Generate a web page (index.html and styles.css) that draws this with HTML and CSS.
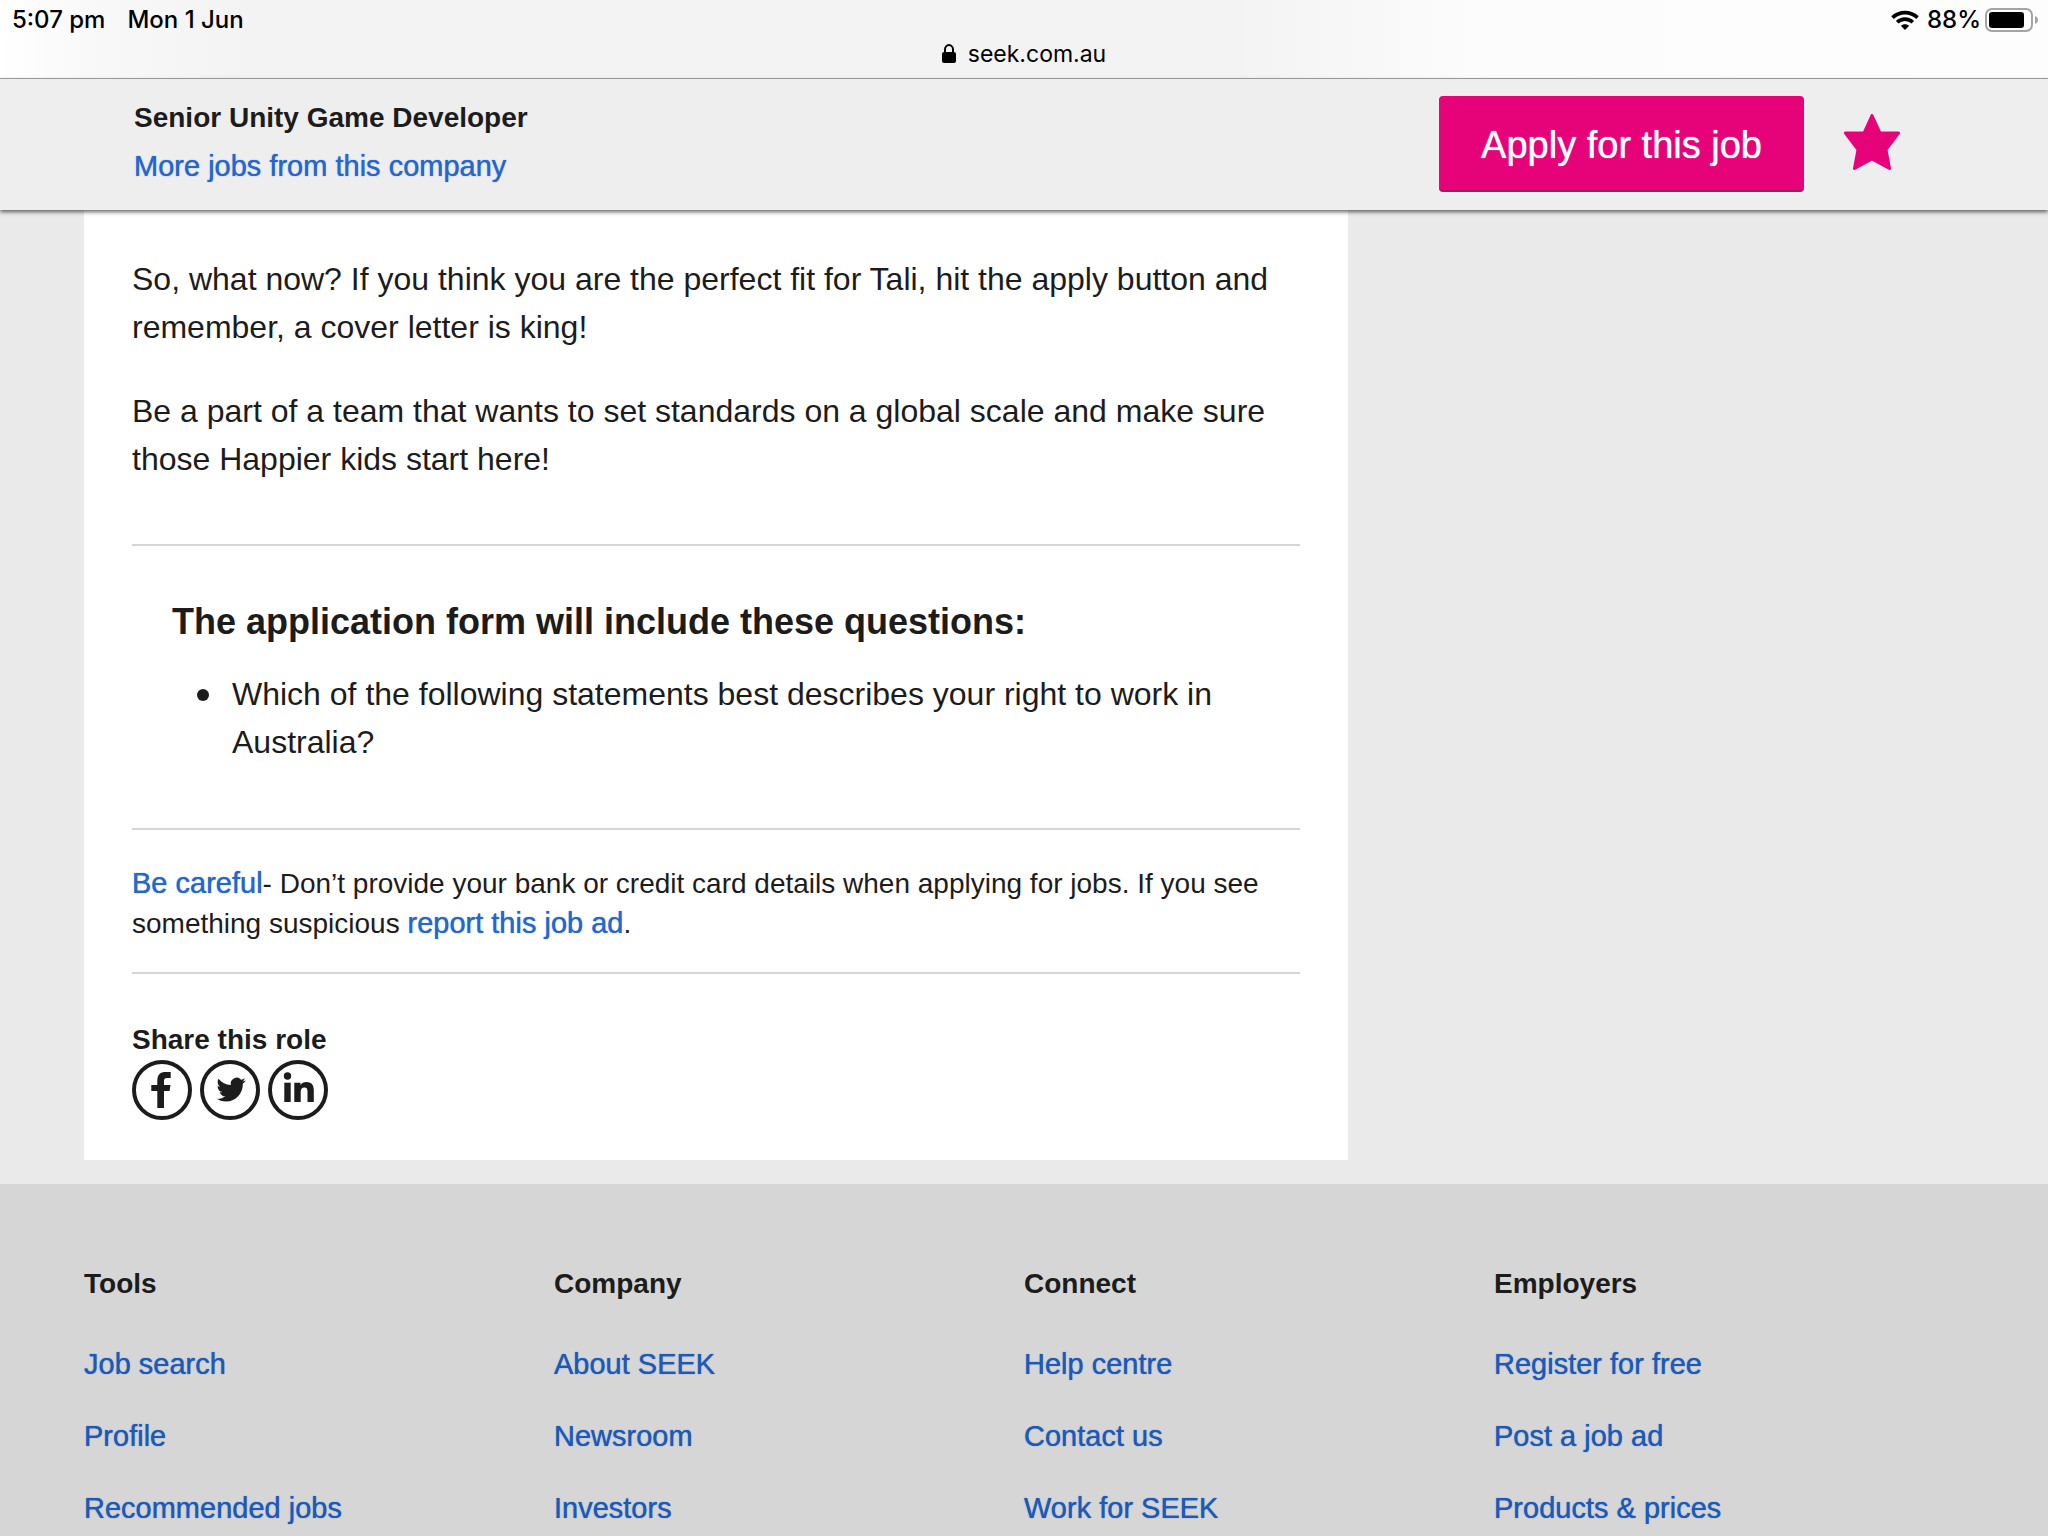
FILE: index.html
```html
<!DOCTYPE html>
<html lang="en-AU">
<head>
<meta charset="utf-8">
<meta name="viewport" content="width=device-width, initial-scale=1">
<title>Senior Unity Game Developer - SEEK</title>
<link rel="stylesheet" href="styles.css">
</head>
<body>
<div class="browser">
  <div class="status">
    <div class="status-group status-time"><span>5:07 pm</span><span>Mon 1 Jun</span></div>
    <div class="status-group status-power">
      <svg class="wifi" width="28" height="20" viewBox="0 0 28 20" fill="none" aria-hidden="true">
        <path d="M1.5 7.6C8.5.9 19.5.9 26.5 7.6" stroke="#000" stroke-width="3.7"/>
        <path d="M6.2 12.3c4.4-4.2 11.2-4.2 15.6 0" stroke="#000" stroke-width="3.6"/>
        <path d="M14 20l-4.2-4.3c2.4-2.1 6-2.1 8.4 0z" fill="#000"/>
      </svg>
      <span>88%</span>
      <svg width="53" height="24" viewBox="0 0 53 24" aria-hidden="true">
        <rect x="1" y="1" width="46" height="22" rx="6" fill="none" stroke="#a3a3a3" stroke-width="2"/>
        <rect x="4" y="4" width="35" height="16" rx="3" fill="#000"/>
        <path d="M50 8c2 .8 3 2.2 3 4s-1 3.2-3 4z" fill="#a3a3a3"/>
      </svg>
    </div>
  </div>
  <div class="address">
    <svg width="14" height="20" viewBox="0 0 14 20" aria-hidden="true">
      <path d="M3 9V5.5a4 4.5 0 0 1 8 0V9" fill="none" stroke="#000" stroke-width="2"/>
      <rect x="0" y="8" width="14" height="11" rx="2" fill="#000"/>
    </svg>
    <span>seek.com.au</span>
  </div>
</div>

<header class="job-bar">
  <div class="job-info">
    <h1>Senior Unity Game Developer</h1>
    <a class="link" href="#company">More jobs from this company</a>
  </div>
  <div class="job-actions">
    <button class="apply" type="button">Apply for this job</button>
    <button class="save" type="button" aria-label="Saved job">
      <svg width="56" height="56" viewBox="0 0 56 56" aria-hidden="true">
        <path d="M28 1.5L36 19H54.5L42 35.5L45.5 54.5L28 45L10.5 54.5L14 35.5L1.5 19H20Z" fill="#e60278" stroke="#e60278" stroke-width="3" stroke-linejoin="round"/>
      </svg>
    </button>
  </div>
</header>

<main class="content">
  <article class="card">
    <section class="description">
      <p>So, what now? If you think you are the perfect fit for Tali, hit the apply button and remember, a cover letter is king!</p>
      <p>Be a part of a team that wants to set standards on a global scale and make sure those Happier kids start here!</p>
    </section>
    <section class="questions">
      <h2>The application form will include these questions:</h2>
      <ul>
        <li>Which of the following statements best describes your right to work in Australia?</li>
      </ul>
    </section>
    <p class="warning"><a class="link" href="#safety">Be careful</a>- Don’t provide your bank or credit card details when applying for jobs. If you see something suspicious <a class="link" href="#report">report this job ad</a>.</p>
    <section class="share">
      <h3>Share this role</h3>
      <div class="share-links">
        <a href="#facebook" aria-label="Facebook">
          <svg width="60" height="60" viewBox="0 0 60 60" aria-hidden="true">
            <circle cx="30" cy="30" r="28" fill="none" stroke="#1c1c1c" stroke-width="4"/>
            <path d="M25.3 48V31H19.3V25H25.3V20.5C25.3 14.5 28.5 12 33.5 12H38.7V18H35C32.8 18 32 19 32 21V25H38.5L37.6 31H32V48Z" fill="#1c1c1c"/>
          </svg>
        </a>
        <a href="#twitter" aria-label="Twitter">
          <svg width="60" height="60" viewBox="0 0 60 60" aria-hidden="true">
            <circle cx="30" cy="30" r="28" fill="none" stroke="#1c1c1c" stroke-width="4"/>
            <g transform="translate(16.5 15) scale(1.22)"><path d="M23.953 4.57a10 10 0 0 1-2.825.775 4.958 4.958 0 0 0 2.163-2.723c-.951.555-2.005.959-3.127 1.184a4.92 4.92 0 0 0-8.384 4.482C7.69 8.095 4.067 6.13 1.64 3.162a4.822 4.822 0 0 0-.666 2.475c0 1.71.87 3.213 2.188 4.096a4.904 4.904 0 0 1-2.228-.616v.06a4.923 4.923 0 0 0 3.946 4.827 4.996 4.996 0 0 1-2.212.085 4.936 4.936 0 0 0 4.604 3.417 9.867 9.867 0 0 1-6.102 2.105c-.39 0-.779-.023-1.17-.067a13.995 13.995 0 0 0 7.557 2.209c9.053 0 13.998-7.496 13.998-13.985 0-.21 0-.42-.015-.63A9.935 9.935 0 0 0 24 4.59z" fill="#1c1c1c"/></g>
          </svg>
        </a>
        <a href="#linkedin" aria-label="LinkedIn">
          <svg width="60" height="60" viewBox="0 0 60 60" aria-hidden="true">
            <circle cx="30" cy="30" r="28" fill="none" stroke="#1c1c1c" stroke-width="4"/>
            <circle cx="19.5" cy="16" r="3.7" fill="#1c1c1c"/>
            <rect x="16.3" y="22.7" width="6.4" height="19.3" fill="#1c1c1c"/>
            <path d="M26.3 22.7H32.5V25.2C33.7 23.2 35.6 22 38.5 22C44 22 45.8 25.5 45.8 30.5V42H39.5V31.7C39.5 29 38.8 27.5 36.5 27.5C33.6 27.5 32.7 29.5 32.7 32V42H26.3Z" fill="#1c1c1c"/>
          </svg>
        </a>
      </div>
    </section>
  </article>
</main>

<footer class="footer">
  <nav aria-label="Tools">
    <h3>Tools</h3>
    <ul>
      <li><a class="link" href="#search">Job search</a></li>
      <li><a class="link" href="#profile">Profile</a></li>
      <li><a class="link" href="#recommended">Recommended jobs</a></li>
    </ul>
  </nav>
  <nav aria-label="Company">
    <h3>Company</h3>
    <ul>
      <li><a class="link" href="#about">About SEEK</a></li>
      <li><a class="link" href="#newsroom">Newsroom</a></li>
      <li><a class="link" href="#investors">Investors</a></li>
    </ul>
  </nav>
  <nav aria-label="Connect">
    <h3>Connect</h3>
    <ul>
      <li><a class="link" href="#help">Help centre</a></li>
      <li><a class="link" href="#contact">Contact us</a></li>
      <li><a class="link" href="#work">Work for SEEK</a></li>
    </ul>
  </nav>
  <nav aria-label="Employers">
    <h3>Employers</h3>
    <ul>
      <li><a class="link" href="#register">Register for free</a></li>
      <li><a class="link" href="#post">Post a job ad</a></li>
      <li><a class="link" href="#products">Products &amp; prices</a></li>
    </ul>
  </nav>
</footer>
</body>
</html>
```

FILE: styles.css
```css
* {
  box-sizing: border-box;
}

body {
  display: flex;
  flex-direction: column;
  min-height: 100vh;
  margin: 0;
  background: #eaeaea;
  color: #1c1c1c;
  font-family: "Liberation Sans", Arial, sans-serif;
  font-size: 32px;
  line-height: 48px;
}

h1, h2, h3, p, ul {
  margin: 0;
  padding: 0;
}

h1, h3 {
  font-size: 28px;
  line-height: 48px;
}

/* The soft shadow thickens the regular weight to a medium */
.link,
.apply {
  text-shadow: 0 0 1px currentColor;
}

.link {
  color: #2765cf;
  font-size: 29px;
  text-decoration: none;
}

/* Browser chrome */
.browser {
  height: 79px;
  border-bottom: 1px solid #a2a2a2;
  background: linear-gradient(90deg, #fff 0, #f9f9f9 4%, #f3f3f3 12%, #f3f3f3 60%, #fcfcfc 72%, #fdfdfd 100%);
  color: #000;
  font-family: Inter, sans-serif;
  font-size: 24px;
  line-height: 40px;
}

.status {
  display: flex;
  justify-content: space-between;
  padding: 0 10px 0 12px;
  font-weight: 500;
}

.status-group {
  display: flex;
  align-items: center;
}

.status-time {
  gap: 22px;
}

.status-power {
  gap: 4px;
}

.wifi {
  margin-right: 4px;
}

.address {
  display: flex;
  align-items: center;
  justify-content: center;
  gap: 12px;
  font-size: 23px;
  line-height: 28px;
}

/* Sticky job bar */
.job-bar {
  position: sticky;
  top: 0;
  display: flex;
  align-items: flex-start;
  justify-content: space-between;
  padding: 15px 134px 16px;
  background: #eee;
  box-shadow: 0 2px 4px #0009;
}

.job-info {
  display: flex;
  flex-direction: column;
}

.job-actions {
  display: flex;
  align-items: center;
  gap: 26px;
  padding: 2px 0;
}

.apply {
  height: 96px;
  padding: 4px 42px 0;
  border: 0;
  border-bottom: 2px solid #a5175f;
  border-radius: 4px;
  background: #e60278;
  color: #fff;
  font-family: inherit;
  font-size: 38px;
}

.save {
  display: flex;
  padding: 12px 14px 16px;
  border: 0;
  background: none;
}

/* Job ad */
.content {
  display: grid;
  grid-template-columns: 1264fr 616fr;
  padding: 0 84px 24px;
}

.card {
  padding: 45px 48px 40px;
  background: #fff;
}

.description {
  display: flex;
  flex-direction: column;
  gap: 36px;
  padding-bottom: 61px;
  border-bottom: 2px solid #d6d6d6;
}

.questions {
  padding: 52px 40px 62px;
  border-bottom: 2px solid #d6d6d6;
}

.questions h2 {
  margin-bottom: 24px;
  font-size: 36px;
  line-height: 48px;
}

.questions ul {
  padding-left: 25px;
}

.questions li {
  display: flex;
  gap: 23px;
}

.questions li::before {
  content: "";
  flex: none;
  width: 12px;
  height: 12px;
  margin-top: 19px;
  border-radius: 50%;
  background: #1c1c1c;
}

.warning {
  padding: 34px 0 28px;
  border-bottom: 2px solid #d6d6d6;
  font-size: 28px;
  line-height: 40px;
}

.warning .link {
  line-height: 1;
}

.share {
  padding-top: 46px;
}

.share h3 {
  line-height: 40px;
}

.share-links {
  display: flex;
  gap: 8px;
}

.share-links a {
  display: flex;
}

/* Footer */
.footer {
  display: grid;
  grid-template-columns: repeat(4, 1fr);
  flex: 1;
  padding: 76px 84px 0;
  background: #d6d6d6;
}

.footer ul {
  display: flex;
  flex-direction: column;
  gap: 24px;
  padding-top: 32px;
  list-style: none;
}

.footer .link {
  display: block;
  color: #1e59b8;
}
```
